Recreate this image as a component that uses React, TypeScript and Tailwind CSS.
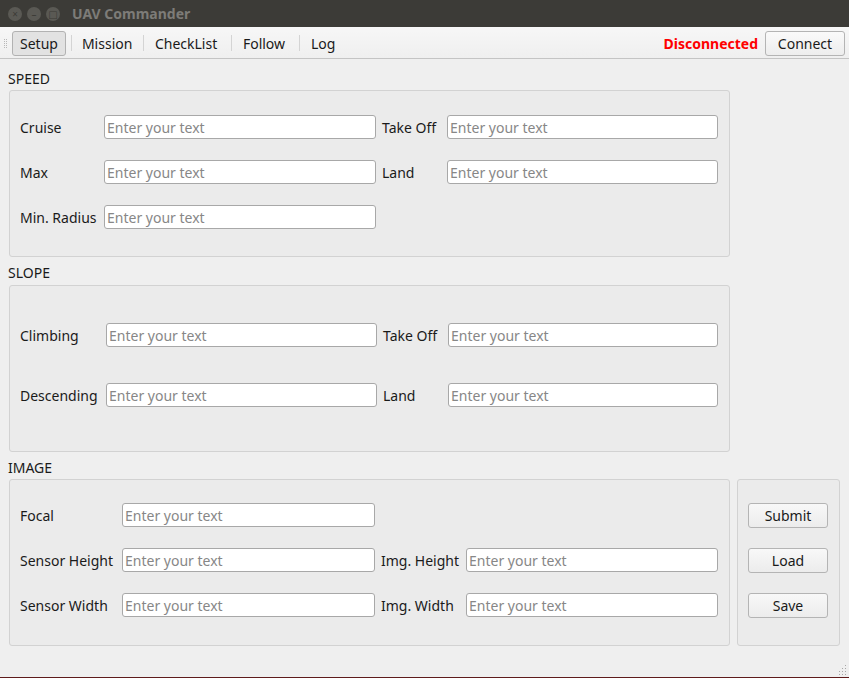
const FONT = { fontFamily: '"Noto Sans", "DejaVu Sans", sans-serif' };

type Row = { label: string; right?: string };

const TABS: { t: string; w: number }[] = [
  { t: "Mission", w: 50 },
  { t: "CheckList", w: 65 },
  { t: "Follow", w: 45 },
  { t: "Log", w: 25 },
];

function Field({ w }: { w: number }) {
  return (
    <input
      placeholder="Enter your text"
      style={{ width: w }}
      className="h-[24px] rounded-[3px] border border-[#a8a8a8] bg-white px-[2px] text-[14px] text-black placeholder:text-[#878787] outline-none"
    />
  );
}

function Group({
  rows,
  cols,
  pt,
  gap,
}: {
  rows: Row[];
  cols: [number, number, number, number];
  pt: number;
  gap: number;
}) {
  return (
    <div
      className="h-[167px] w-[721px] rounded-[3px] border border-[#d2d2d2] bg-[#ebebeb] pl-[10px]"
      style={{ paddingTop: pt }}
    >
      <div className="flex flex-col" style={{ gap }}>
        {rows.map((r) => (
          <div key={r.label} className="flex items-center text-[14px] text-[#1a1a1a]">
            <div style={{ width: cols[0] }}>{r.label}</div>
            <Field w={cols[1]} />
            {r.right && (
              <>
                <div className="pl-[6px]" style={{ width: cols[2] }}>
                  {r.right}
                </div>
                <Field w={cols[3]} />
              </>
            )}
          </div>
        ))}
      </div>
    </div>
  );
}

function Section({ title, h, pb }: { title: string; h: number; pb: number }) {
  return (
    <div
      className="flex items-end pl-[8px] text-[14px] text-[#1a1a1a]"
      style={{ height: h, paddingBottom: pb }}
    >
      {title}
    </div>
  );
}

function Btn({ children }: { children: string }) {
  return (
    <button className="h-[25px] w-[80px] rounded-[3px] border border-[#b4b4b4] bg-gradient-to-b from-[#f8f8f8] to-[#ececec] text-[14px] text-[#1a1a1a]">
      {children}
    </button>
  );
}

export default function App() {
  return (
    <div style={FONT} className="flex h-[678px] w-[849px] flex-col overflow-hidden bg-[#efefef]">
      {/* title bar */}
      <div className="flex h-[27px] items-center bg-[#3c3b37] pl-[8px]">
        <div className="flex gap-[5px]">
          {["×", "–", "□"].map((g) => (
            <div
              key={g}
              className="flex h-[14px] w-[14px] items-center justify-center rounded-full bg-[#5a5954] text-[10px] leading-none text-[#3c3b37]"
            >
              {g}
            </div>
          ))}
        </div>
        <div className="ml-[12px] text-[14px] font-bold text-[#7d7c78]">UAV Commander</div>
      </div>

      {/* toolbar */}
      <div className="flex h-[32px] items-center border-b border-[#c4c4c4] bg-gradient-to-b from-[#f7f7f7] to-[#efefef] pl-[4px] pr-[4px] pt-[1px]">
        <div className="mr-[5px] grid grid-cols-2 gap-[1px]">
          {Array.from({ length: 10 }).map((_, i) => (
            <div key={i} className="h-[1px] w-[1px] bg-[#b8b8b8]" />
          ))}
        </div>
        <div className="flex h-[25px] items-center rounded-[3px] border border-[#b2b2b2] bg-[#e2e2e2] px-[7px] text-[14px] text-[#1a1a1a]">
          Setup
        </div>
        {TABS.map(({ t, w }, i) => (
          <div key={t} className="flex items-center">
            <div
              className={
                i === 0
                  ? "ml-[5px] mr-[10px] h-[16px] w-[1px] bg-[#d4d4d4]"
                  : "ml-[11px] mr-[11px] h-[16px] w-[1px] bg-[#d4d4d4]"
              }
            />
            <div className="text-[14px] text-[#1a1a1a]" style={{ width: w }}>
              {t}
            </div>
          </div>
        ))}
        <div className="flex-1" />
        <div className="mr-[7px] text-[14px] font-bold text-[#ff0000]">Disconnected</div>
        <button className="h-[25px] w-[80px] rounded-[3px] border border-[#b4b4b4] bg-gradient-to-b from-[#fafafa] to-[#ededed] text-[14px] text-[#1a1a1a]">
          Connect
        </button>
      </div>

      <div className="flex flex-col pl-[9px]">
        <div className="-ml-[9px]">
          <Section title="SPEED" h={31} pb={1} />
        </div>
        <Group
          pt={24}
          gap={21}
          cols={[84, 272, 71, 271]}
          rows={[
            { label: "Cruise", right: "Take Off" },
            { label: "Max", right: "Land" },
            { label: "Min. Radius" },
          ]}
        />
        <div className="-ml-[9px]">
          <Section title="SLOPE" h={28} pb={2} />
        </div>
        <Group
          pt={37}
          gap={36}
          cols={[86, 271, 71, 270]}
          rows={[
            { label: "Climbing", right: "Take Off" },
            { label: "Descending", right: "Land" },
          ]}
        />
        <div className="-ml-[9px]">
          <Section title="IMAGE" h={27} pb={1} />
        </div>
        <div className="flex gap-[7px]">
          <Group
            pt={23}
            gap={21}
            cols={[102, 253, 91, 252]}
            rows={[
              { label: "Focal" },
              { label: "Sensor Height", right: "Img. Height" },
              { label: "Sensor Width", right: "Img. Width" },
            ]}
          />
          <div className="flex h-[167px] w-[103px] flex-col items-start gap-[20px] rounded-[3px] border border-[#d2d2d2] bg-[#ebebeb] pl-[10px] pt-[23px]">
            <Btn>Submit</Btn>
            <Btn>Load</Btn>
            <Btn>Save</Btn>
          </div>
        </div>
      </div>

      <div className="flex-1" />
      <div className="flex justify-end pr-[2px] pb-[2px]">
        <svg width="10" height="10" viewBox="0 0 10 10">
          {[
            [8, 0],
            [8, 3],
            [5, 3],
            [8, 6],
            [5, 6],
            [2, 6],
            [8, 9],
            [5, 9],
            [2, 9],
          ].map(([x, y], i) => (
            <rect key={i} x={x} y={y} width="1" height="1" fill="#a8a8a8" />
          ))}
        </svg>
      </div>
      <div className="h-[1px] bg-[#5e1b1b]" />
    </div>
  );
}
